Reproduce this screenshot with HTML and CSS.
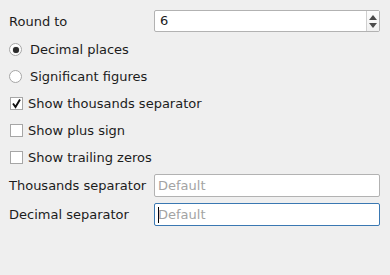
FILE: index.html
```html
<!DOCTYPE html>
<html lang="en">
<head>
    <meta charset="UTF-8">
    <title>Number format</title>
    <link rel="stylesheet" href="styles.css">
</head>
<body>
    <div class="form">
        <div class="row field-row first">
            <span class="label">Round to</span>
            <div class="spinbox">
                <span class="spin-value">6</span>
                <div class="spin-buttons">
                    <svg width="8" height="5" viewBox="0 0 8 5"><path d="M0 5 L4 0 L8 5 Z" fill="#4a4a4a"/></svg>
                    <svg width="8" height="5" viewBox="0 0 8 5"><path d="M0 0 L8 0 L4 5 Z" fill="#4a4a4a"/></svg>
                </div>
            </div>
        </div>

        <div class="row option">
            <span class="radio checked"><span class="dot"></span></span>
            <span class="radio-text">Decimal places</span>
        </div>
        <div class="row option">
            <span class="radio"></span>
            <span class="radio-text">Significant figures</span>
        </div>

        <div class="row option">
            <span class="check">
                <svg width="11" height="11" viewBox="0 0 11 11"><path d="M2 5.5 L4.5 9 L9 1.5" fill="none" stroke="#111" stroke-width="1.9"/></svg>
            </span>
            <span class="check-text">Show thousands separator</span>
        </div>
        <div class="row option">
            <span class="check"></span>
            <span class="check-text">Show plus sign</span>
        </div>
        <div class="row option">
            <span class="check"></span>
            <span class="check-text">Show trailing zeros</span>
        </div>

        <div class="row field-row sep">
            <span class="label">Thousands separator</span>
            <div class="line-edit"><span class="placeholder">Default</span></div>
        </div>
        <div class="row field-row sep">
            <span class="label">Decimal separator</span>
            <div class="line-edit focused"><span class="caret"></span><span class="placeholder">Default</span></div>
        </div>
    </div>
</body>
</html>
```

FILE: styles.css
```css
* {
    margin: 0;
    padding: 0;
    box-sizing: border-box;
}
body {
    background-color: #efefef;
    font-family: 'DejaVu Sans', sans-serif;
    font-size: 13px;
    color: #1c1c1c;
    width: 390px;
    height: 275px;
    overflow: hidden;
}
.form {
    display: flex;
    flex-direction: column;
    padding: 10px 10px 0 9px;
}
.row {
    display: flex;
    align-items: center;
}
.field-row {
    justify-content: space-between;
}
.label {
    width: 145px;
}
.spinbox {
    flex: 1;
    height: 22px;
    display: flex;
    background-color: white;
    border: 1px solid #b2b2b2;
    border-radius: 2px;
}
.spin-value {
    flex: 1;
    padding-left: 5px;
    line-height: 20px;
}
.spin-buttons {
    width: 13px;
    border-left: 1px solid #cfcfcf;
    display: flex;
    flex-direction: column;
    align-items: center;
    justify-content: center;
    gap: 3px;
    background: linear-gradient(to bottom, #fdfdfd, #f0f0f0);
}
.option {
    height: 27px;
}
.first + .option {
    margin-top: 4px;
}
.radio {
    width: 13px;
    height: 13px;
    border: 1px solid #a6a6a6;
    border-radius: 50%;
    background-color: white;
    display: flex;
    align-items: center;
    justify-content: center;
}
.radio .dot {
    width: 6px;
    height: 6px;
    border-radius: 50%;
    background-color: #2b2b2b;
    box-shadow: 0 0 1px #555;
}
.radio-text {
    margin-left: 8px;
}
.check {
    width: 13px;
    height: 13px;
    margin-left: 1px;
    border: 1px solid #a6a6a6;
    background-color: white;
    display: flex;
    align-items: center;
    justify-content: center;
}
.check-text {
    margin-left: 5px;
}
.sep {
    margin-top: 3px;
}
.sep + .sep {
    margin-top: 6px;
}
.line-edit {
    flex: 1;
    height: 23px;
    display: flex;
    align-items: center;
    background-color: white;
    border: 1px solid #b2b2b2;
    border-radius: 2px;
    padding-left: 3px;
}
.line-edit.focused {
    border-color: #3a78b2;
}
.placeholder {
    color: #a3a3a3;
}
.caret {
    width: 1px;
    height: 16px;
    background-color: #000;
    margin-right: -1px;
}
```
